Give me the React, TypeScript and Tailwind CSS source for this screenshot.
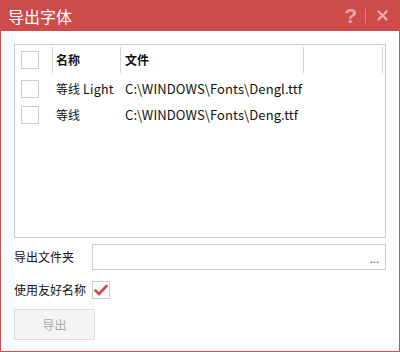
import React from "react";

const font = { fontFamily: '"Noto Sans CJK SC", "Noto Sans", sans-serif' };

function Box({ checked = false }: { checked?: boolean }) {
  return (
    <div className="w-[18px] h-[18px] border border-[#cccccc] bg-white flex items-center justify-center">
      {checked && (
        <svg width="14" height="12" viewBox="0 0 14 12">
          <path d="M1.5 6.5 L5 10 L12.5 2" fill="none" stroke="#cc4b4b" strokeWidth="2.6" strokeLinecap="round" strokeLinejoin="round" />
        </svg>
      )}
    </div>
  );
}

export default function App() {
  const rows = [
    { name: "等线", latin: " Light", file: "C:\\WINDOWS\\Fonts\\Dengl.ttf" },
    { name: "等线", latin: "", file: "C:\\WINDOWS\\Fonts\\Deng.ttf" },
  ];
  return (
    <div className="w-[400px] h-[352px] flex flex-col bg-white text-[12px] text-[#111]" style={font}>
      <div className="h-[31px] bg-[#cd4b4b] flex items-center pl-[8px] pr-[12px]">
        <div className="text-white text-[16px] leading-none flex-1">导出字体</div>
        <div className="text-[#eca3a3] text-[21px] font-bold leading-none mr-[8px]" style={{ fontFamily: '"Liberation Sans", Arial, sans-serif' }}>?</div>
        <div className="w-px h-[14px] bg-[#dd8080] mr-[11px]" />
        <svg width="11" height="11" viewBox="0 0 11 11">
          <path d="M1.5 1.5 L9.5 9.5 M9.5 1.5 L1.5 9.5" stroke="#f0b0b0" strokeWidth="2.2" strokeLinecap="round" />
        </svg>
      </div>
      <div className="flex-1 flex flex-col border-x border-b border-[#cd4b4b] px-[13px] pt-[13px]">
        <div className="h-[194px] border border-[#cccccc] flex flex-col">
          <div className="h-[28px] flex items-stretch font-bold pt-[2px]">
            <div className="w-[38px] flex items-center pl-[6px] border-r border-[#d6d6d6]">
              <Box />
            </div>
            <div className="w-[68px] flex items-center pl-[3px] border-r border-[#d6d6d6]">名称</div>
            <div className="w-[183px] flex items-center pl-[4px] border-r border-[#d6d6d6]">文件</div>
            <div className="w-[79px] border-r border-[#d6d6d6]" />
          </div>
          <div className="mt-[3px] flex flex-col">
            {rows.map((r) => (
              <div key={r.file} className="h-[26px] flex items-center">
                <div className="w-[38px] pl-[6px]">
                  <Box />
                </div>
                <div className="w-[69px] pl-[3px]">
                  {r.name}
                  <span className="text-[12.5px] tracking-[0.2px]">{r.latin}</span>
                </div>
                <div className="pl-[3px] text-[13px] tracking-[0.1px]">{r.file}</div>
              </div>
            ))}
          </div>
        </div>
        <div className="mt-[6px] flex items-center h-[26px]">
          <div className="w-[78px]">导出文件夹</div>
          <div className="flex-1 h-[26px] border border-[#cccccc] flex items-end justify-end pr-[6px] pb-[2px] text-[11px] text-[#555] leading-none">
            <span className="mb-[3px]">...</span>
          </div>
        </div>
        <div className="mt-[11px] flex items-center h-[18px]">
          <div className="w-[78px]">使用友好名称</div>
          <Box checked />
        </div>
        <div className="mt-[10px]">
          <div className="w-[81px] h-[31px] border border-[#dddddd] bg-[#f4f4f4] text-[#aaaaaa] flex items-center justify-center">导出</div>
        </div>
      </div>
    </div>
  );
}
